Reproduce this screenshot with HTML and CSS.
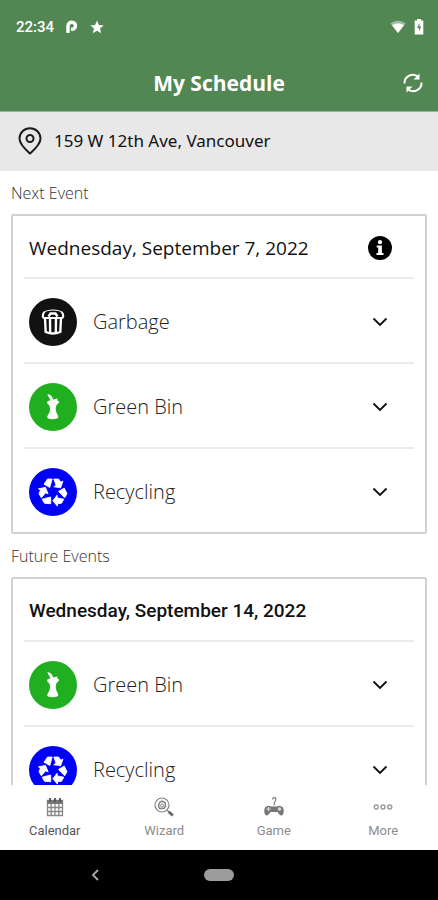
FILE: index.html
```html
<!DOCTYPE html>
<html lang="en">
<head>
<meta charset="utf-8">
<meta name="viewport" content="width=device-width, initial-scale=1">
<title>My Schedule</title>
<link rel="stylesheet" href="styles.css">
</head>
<body>
<svg class="defs" aria-hidden="true">
  <symbol id="chevron" viewBox="0 0 16 10"><path d="M1.500 1.500 8 8l6.500-6.500" fill="none" stroke="currentColor" stroke-width="1.900"/></symbol>
  <symbol id="apple" viewBox="-24 -24 48 48">
    <path d="M-5.500-13C-2-12-.3-10.500 0-7.500L4.500-8.500 4.300-6.500C6.500-6 6.300-4.500 5.300-3.500 3.200-2.500 2.600 0 2.800 3 3 6 5 7.500 5.300 10 5.300 12.800-5.300 12.800-5.800 10.500-5.500 7.500-3.500 7-3 3-2.800 0-3.500-2-5.500-3.200-6.500-5.500-5-6.500-2.500-6.500-2.500-8.500-5-9.500-5.500-13Z" fill="#fff"/>
  </symbol>
  <symbol id="recycle" viewBox="-24 -24 48 48">
    <g id="arm" fill="#fff" stroke="#fff" stroke-width=".8" stroke-linejoin="round"><path d="M-5.500-13H-.8L-3.200-4.500-9-7.800Z"/><path d="M.8-13H5.500L8-9.800 10-11 7.700-4.200.8-5.200 3-6.700Z"/></g>
    <use href="#arm" transform="rotate(120)"/>
    <use href="#arm" transform="rotate(240)"/>
  </symbol>
  <symbol id="trash" viewBox="-24 -24 48 48">
    <g fill="none" stroke="#fff">
      <path d="M-8.500-10C-11-8-10.500-4-8.500-4H8.500C10.500-4 11-8 8.500-10" stroke-width="2.200"/>
      <path d="M-9-9.500C-7-11.500-3-12 0-12S7-11.500 9-9.500" stroke-width="1.200"/>
      <path d="M-4.500-5.500-2.500-8.500H2.500L4.500-5.500" stroke-width="2.400"/>
      <path d="M-8-4-7.300 10Q0 13 7.300 10L8-4" stroke-width="2.400"/>
      <path d="M-3-3-2.800 11M3-3 2.800 11" stroke-width="2.400"/>
    </g>
  </symbol>
</svg>
<div class="app">
  <header class="top">
    <div class="status">
      <span>22:34</span>
      <svg width="12" height="14" viewBox="0 0 12 14"><path d="M2 13V5.500A4 4 0 0 1 6 2.200a3.500 3.500 0 0 1 0 7H5" fill="none" stroke="#fff" stroke-width="3.400"/></svg>
      <svg width="14" height="14" viewBox="0 0 14 14"><path d="M7 .5 8.900 5l4.800.4-3.700 3.100 1.200 4.700L7 10.700l-4.200 2.500L4 8.500.3 5.400 5.100 5Z" fill="#fff"/></svg>
      <span class="spacer"></span>
      <svg width="16" height="14" viewBox="0 0 16 14"><path d="M.5 3.500C5-.3 11-.3 15.500 3.500L8 13Z" fill="#fff" opacity=".45"/><path d="M2 5.200C5.500 3 10.500 3 14 5.200L8 13Z" fill="#fff"/></svg>
      <svg width="10" height="16" viewBox="0 0 10 16"><path d="M3 0h4v1.500h2.300V15.500H.7V1.500H3Z" fill="#fff"/><path d="M5.500 4 3 9h2v3.500L7.200 7.500h-1.700Z" fill="#528753"/></svg>
    </div>
    <div class="titlebar">
      <h1>My Schedule</h1>
      <button class="refresh" aria-label="Refresh">
        <svg width="20" height="20" viewBox="0 0 20 20"><g fill="none" stroke="#fff" stroke-width="2"><path d="M1.500 10.500A8.300 8.300 0 0 1 14.500 3.300"/><path d="M18.500 9.500A8.300 8.300 0 0 1 5.500 16.700"/></g><path d="M16.500.5V6.500H10.500ZM3.500 19.500V13.500H9.500Z" fill="#fff"/></svg>
      </button>
    </div>
  </header>
  <div class="address">
    <svg width="24" height="28" viewBox="0 0 24 28"><g fill="none" stroke="#1c1c1c" stroke-width="2"><path d="M12 26.500C7.500 22.500 1.500 17.500 1.500 11.500a10.500 10.300 0 0 1 21 0C22.500 17.500 16.500 22.500 12 26.500Z"/><circle cx="12" cy="11.500" r="3.500"/></g></svg>
    <span>159 W 12th Ave, Vancouver</span>
  </div>
  <main class="content">
    <h2>Next Event</h2>
    <section class="card">
      <div class="date">
        <h3>Wednesday, September 7, 2022</h3>
        <button class="info" aria-label="Information">
          <svg width="24" height="24" viewBox="0 0 24 24"><circle cx="12" cy="12" r="12"/><circle cx="12" cy="6.200" r="2.100" fill="#fff"/><path d="M8.700 9.500H13.900V17H15.500V19H8.500V17H10.200V11.500H8.700Z" fill="#fff"/></svg>
        </button>
      </div>
      <button class="row"><svg class="bin black"><use href="#trash"/></svg><span>Garbage</span><svg class="chev"><use href="#chevron"/></svg></button>
      <button class="row"><svg class="bin green"><use href="#apple"/></svg><span>Green Bin</span><svg class="chev"><use href="#chevron"/></svg></button>
      <button class="row"><svg class="bin blue"><use href="#recycle"/></svg><span>Recycling</span><svg class="chev"><use href="#chevron"/></svg></button>
    </section>
    <h2>Future Events</h2>
    <section class="card">
      <div class="date strong"><h3>Wednesday, September 14, 2022</h3></div>
      <button class="row"><svg class="bin green"><use href="#apple"/></svg><span>Green Bin</span><svg class="chev"><use href="#chevron"/></svg></button>
      <button class="row"><svg class="bin blue"><use href="#recycle"/></svg><span>Recycling</span><svg class="chev"><use href="#chevron"/></svg></button>
    </section>
  </main>
  <nav class="tabs">
    <a href="#calendar" class="active">
      <svg width="20" height="20" viewBox="0 0 20 20"><path d="M2.500 3.500H17.500V18.500H2.500ZM2.500 10.500H17.500M2.500 14.500H17.500M6.200 7V18.500M10 7V18.500M13.800 7V18.500" fill="none" stroke="#888" stroke-width="1.300"/><path d="M2 3H18V7H2Z" fill="#777"/><path d="M5 1V5M10 1V5M15 1V5" stroke="#555" stroke-width="1.800"/></svg>
      <span>Calendar</span></a>
    <a href="#wizard">
      <svg width="20" height="20" viewBox="0 0 20 20"><g fill="none" stroke="#858585"><circle cx="8" cy="8" r="7" stroke-width="1.200"/><path d="M5.500 11.500 4.500 9 5.500 5.500 8 4.200 11 5.500 11.500 9 10 11.500Z" stroke-width="1.500"/><circle cx="8" cy="8.500" r="1.500"/><path d="M13 13 15 15" stroke-width="1.300"/><path d="M14.800 14.800 18.800 18.500" stroke="#666" stroke-width="2.800"/></g></svg>
      <span>Wizard</span></a>
    <a href="#game">
      <svg width="20" height="20" viewBox="0 0 20 20"><path d="M8.500 2.500C9-.2 12-.2 11.800 2.500 11.700 4 10 4.500 10 8.500" fill="none" stroke="#888" stroke-width="1.300"/><path d="M1 10.500Q4 7.500 7 9.500H13Q16 7.500 19 10.500C20 13 20 15 19 17.500 17.500 19.500 15.500 18.500 13.500 15H6.500C4.500 18.500 2.500 19.500 1 17.500 0 15 0 13 1 10.500Z" fill="#777"/><path d="M2.500 12H6.500M4.500 10V14" stroke="#ddd" stroke-width="1.200"/><circle cx="15.500" cy="12" r="1.700" fill="#ddd"/></svg>
      <span>Game</span></a>
    <a href="#more">
      <svg width="20" height="20" viewBox="0 0 20 20"><g fill="none" stroke="#999" stroke-width="1.400"><circle cx="3.200" cy="10" r="2"/><circle cx="10" cy="10" r="2"/><circle cx="16.800" cy="10" r="2"/></g></svg>
      <span>More</span></a>
  </nav>
  <footer class="system">
    <button aria-label="Back"><svg width="8" height="12" viewBox="0 0 8 12"><path d="M7 1 2 6l5 5" fill="none" stroke="#aaa" stroke-width="1.800"/></svg></button>
    <button class="home" aria-label="Home"></button>
    <span></span>
  </footer>
</div>
</body>
</html>
```
FILE: styles.css
```css
* { box-sizing: border-box; }
body { margin: 0; font-family: "Open Sans", "Noto Sans", sans-serif; background: #fff; color: #111; }
h1, h2, h3 { margin: 0; font-weight: 400; }
svg { display: block; flex: none; }
button { border: 0; padding: 0; margin: 0; background: none; color: inherit; font: inherit; }
.defs { position: absolute; width: 0; height: 0; }
.app { display: flex; flex-direction: column; height: 100vh; }

.top { flex: none; background: #528753; color: #fff; border-bottom: 1px solid #9fb3a0; }
.status { display: flex; align-items: center; gap: 12px; height: 54px; padding: 0 14px 0 16px; font: 500 15px Roboto, sans-serif; }
.status .spacer { flex: 1; }
.status svg:last-child { margin-left: -4px; }
.titlebar { display: grid; grid-template-columns: 50px 1fr 50px; align-items: center; height: 57px; }
.titlebar h1 { grid-column: 2; text-align: center; font-size: 21px; font-weight: 700; }
.refresh { justify-self: center; }

.address { flex: none; display: flex; align-items: center; gap: 12px; height: 59px; padding: 0 18px 2px; background: #e8e8e8; font-family: "Noto Sans", sans-serif; font-size: 17px; }

.content { flex: 1; min-height: 0; overflow: hidden; padding: 0 11px; }
h2 { height: 43px; font-size: 16px; line-height: 44px; font-weight: 300; color: #333; }
.card { border: 2px solid #d0d3d2; border-radius: 2px; padding: 0 11px; }
.date { display: flex; align-items: center; justify-content: space-between; height: 61px; padding: 2px 22px 0 5px; }
.date h3 { font-size: 19px; }
.date.strong h3 { font: 500 19px Roboto, sans-serif; }
.row { display: flex; align-items: center; gap: 16px; width: 100%; height: 85px; padding: 2px 26px 0 5px; border-top: 2px solid #e9eaea; text-align: left; font-size: 20px; font-weight: 300; color: #222; }
.row span { flex: 1; }
.bin { width: 48px; height: 48px; border-radius: 50%; }
.black { background: #111; }
.green { background: #1faf1f; }
.blue { background: #0000fb; }
.chev { width: 16px; height: 10px; color: #111; }

.tabs { flex: none; display: grid; grid-template-columns: repeat(4, 1fr); height: 65px; background: #fff; }
.tabs a { display: flex; flex-direction: column; align-items: center; justify-content: center; gap: 6px; font: 400 13px/16px Roboto, sans-serif; color: #8c8c8c; text-decoration: none; }
.tabs .active { color: #555; }

.system { flex: none; display: grid; grid-template-columns: 190px 58px 190px; justify-content: center; justify-items: center; align-items: center; height: 50px; background: #000; }
.home { width: 30px; height: 12px; border-radius: 6px; background: #9c9c9c; }
```
